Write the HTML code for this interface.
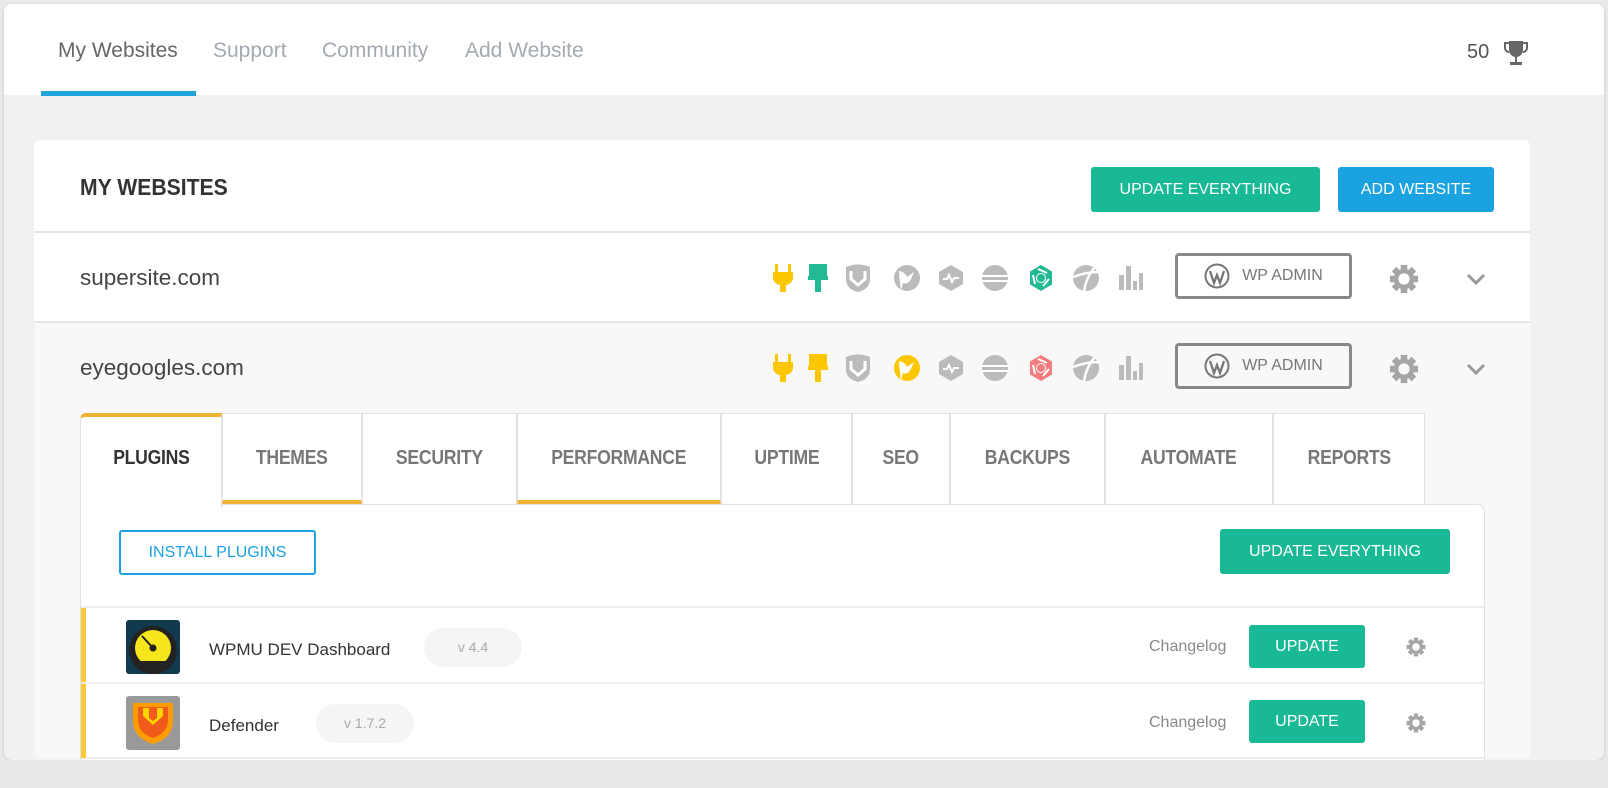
<!DOCTYPE html>
<html><head><meta charset="utf-8"><style>
*{box-sizing:border-box;margin:0;padding:0}
body{width:1608px;height:788px;background:#e9e9e9;font-family:"Liberation Sans",sans-serif;position:relative;overflow:hidden}
.a{position:absolute}
#win{left:4px;top:4px;width:1600px;height:756px;background:#f1f1f1;border-radius:8px;overflow:hidden;box-shadow:0 1px 3px rgba(0,0,0,.15)}
#hdr{left:0;top:0;width:1600px;height:91px;background:#fff}
.nav{top:35px;font-size:21px;color:#a3aab1}
#card{left:34px;top:140px;width:1496px;height:618px;background:#fff;border-radius:6px;overflow:hidden}
.btn{color:#fff;font-size:16px;text-align:center;border-radius:3px}
.row{left:0;width:1496px;border-top:2px solid #e6e6e6}
.site{font-size:22.5px;color:#444;left:46px}
.wp{width:177px;height:46px;border:3px solid #888;border-radius:4px;color:#777;font-size:16px;display:flex;align-items:center;justify-content:center;gap:12px}
.tab{top:413px;height:91px;background:#fff;border:1px solid #e2e2e2;border-bottom:none;font-weight:bold;font-size:20px;color:#777;text-align:center;padding-top:33px;letter-spacing:-.3px}
.tab span{display:inline-block;transform:scaleX(.88)}
.or{border-bottom:4px solid #f0b232}
</style></head><body>
<div id="win" class="a">
 <div id="hdr" class="a">
  <div class="a nav" style="left:54px;color:#666">My Websites</div>
  <div class="a" style="left:37px;top:87px;width:155px;height:5px;background:#1fa4dc"></div>
  <div class="a nav" style="left:209px">Support</div>
  <div class="a nav" style="left:318px">Community</div>
  <div class="a nav" style="left:461px">Add Website</div>
  <div class="a" style="left:1463px;top:37px;font-size:20px;color:#555">50</div>
  <svg class="a" style="left:1500px;top:35px" width="24" height="28" viewBox="0 0 24 28"><path d="M5 2h14v9a7 7 0 0 1-14 0z" fill="#666"/><path d="M5 4H1v5a4 4 0 0 0 4 4M19 4h4v5a4 4 0 0 1-4 4" stroke="#666" stroke-width="2" fill="none"/><rect x="11" y="17" width="2" height="6" fill="#666"/><rect x="6" y="23" width="12" height="3" fill="#666"/></svg>
 </div>
</div>
<div id="card" class="a">
 <div class="a" style="left:46px;top:34px;font-size:23px;font-weight:bold;color:#333;transform:scaleX(.92);transform-origin:left">MY WEBSITES</div>
 <div class="a btn" style="left:1057px;top:27px;width:229px;height:45px;line-height:45px;background:#19b996">UPDATE EVERYTHING</div>
 <div class="a btn" style="left:1304px;top:27px;width:156px;height:45px;line-height:45px;background:#1aa3e0">ADD WEBSITE</div>
 <div class="a row" style="top:91px;height:91px;background:#fff"></div>
 <div class="a site" style="top:125px">supersite.com</div>
 <div class="a row" style="top:181px;height:470px;background:#f8f8f8"></div>
 <div class="a site" style="top:215px">eyegoogles.com</div>
</div>
<!-- icons -->
<svg class="a" style="left:770px;top:260px" width="390" height="130" viewBox="0 0 390 130">
 <defs>
  <g id="plug"><rect x="-8" y="-14" width="3" height="8" fill="currentColor"/><rect x="5" y="-14" width="3" height="8" fill="currentColor"/><path d="M-10-6h20v6a8 8 0 0 1-7 7v7h-6v-7a8 8 0 0 1-7-7z" fill="currentColor"/></g>
  <g id="brush"><rect x="-9" y="-14" width="18" height="12" fill="currentColor"/><rect x="-10" y="-2" width="20" height="4" fill="currentColor"/><rect x="-3" y="2" width="6" height="12" fill="currentColor"/></g>
  <g id="shield"><path d="M-12-11q12-5 24 0v12q0 10-12 13q-12-3-12-13z" fill="#bbb"/><path d="M-7-7v8l7 6 7-6v-8" stroke="#fff" stroke-width="3" fill="none"/></g>
  <g id="hex"><path d="M0-13 12-6v12L0 13-12 6v-12z" fill="#bbb"/><path d="M-8 1h4l2-4 3 7 2-4h5" stroke="#fff" stroke-width="2" fill="none"/></g>
  <g id="stripes"><circle r="13" fill="#bbb"/><rect x="-14" y="-3" width="28" height="2" fill="#fff"/><rect x="-14" y="2" width="28" height="2" fill="#fff"/></g>
  <g id="ap"><path d="M0-13 11-6.5v13L0 13-11 6.5v-13z" fill="currentColor"/><circle r="5" fill="#fff"/><circle r="4" fill="currentColor"/><path d="M-3-9 6-5M8 1 2 8M-6 6-8-3" stroke="#fff" stroke-width="2"/></g>
  <g id="ball"><circle r="13" fill="#bbb"/><path d="M-13-1Q0-6 13-6M-2 13Q0 0 8-10" stroke="#fff" stroke-width="2.5" fill="none"/></g>
  <g id="bars"><rect x="-12" y="-3" width="5" height="15" fill="#bbb"/><rect x="-5" y="-12" width="5" height="24" fill="#bbb"/><rect x="2" y="3" width="4" height="9" fill="#bbb"/><rect x="8" y="-5" width="4" height="17" fill="#bbb"/></g>
  <g id="bird"><circle r="13" fill="currentColor"/><path d="M-8-7q6 1 8 6l7-5-3 7q-3 6-8 4l-2 8-1-9q-1-6-1-11z" fill="#fff"/></g>
 </defs>
 <g transform="translate(13,18)"><use href="#plug" style="color:#fcc600"/></g>
 <g transform="translate(48,18)"><use href="#brush" style="color:#23b995"/></g>
 <g transform="translate(88,18)"><use href="#shield"/></g>
 <g transform="translate(137,18)"><use href="#bird" style="color:#bbb"/></g>
 <g transform="translate(181,18)"><use href="#hex"/></g>
 <g transform="translate(225,18)"><use href="#stripes"/></g>
 <g transform="translate(271,18)"><use href="#ap" style="color:#23b995"/></g>
 <g transform="translate(316,18)"><use href="#ball"/></g>
 <g transform="translate(361,18)"><use href="#bars"/></g>
 <g transform="translate(13,108)"><use href="#plug" style="color:#fcc600"/></g>
 <g transform="translate(48,108)"><use href="#brush" style="color:#fcc600"/></g>
 <g transform="translate(88,108)"><use href="#shield"/></g>
 <g transform="translate(137,108)"><use href="#bird" style="color:#fcc600"/></g>
 <g transform="translate(181,108)"><use href="#hex"/></g>
 <g transform="translate(225,108)"><use href="#stripes"/></g>
 <g transform="translate(271,108)"><use href="#ap" style="color:#f27d7d"/></g>
 <g transform="translate(316,108)"><use href="#ball"/></g>
 <g transform="translate(361,108)"><use href="#bars"/></g>
</svg>
<div class="a wp" style="left:1175px;top:253px"><svg width="26" height="26" viewBox="0 0 26 26"><circle cx="13" cy="13" r="11.5" fill="none" stroke="#777" stroke-width="2"/><path d="M6 8l4 12 3-8 3 8 4-12" stroke="#777" stroke-width="2.3" fill="none"/></svg>WP ADMIN</div>
<div class="a wp" style="left:1175px;top:343px"><svg width="26" height="26" viewBox="0 0 26 26"><circle cx="13" cy="13" r="11.5" fill="none" stroke="#777" stroke-width="2"/><path d="M6 8l4 12 3-8 3 8 4-12" stroke="#777" stroke-width="2.3" fill="none"/></svg>WP ADMIN</div>
<svg class="a" style="left:1389px;top:264px" width="30" height="30" viewBox="-16 -16 32 32"><g id="gear" fill="#a5a5a5"><circle r="11"/><g id="t"><rect x="-3.5" y="-15" width="7" height="6"/><rect x="-3.5" y="9" width="7" height="6"/></g><use href="#t" transform="rotate(45)"/><use href="#t" transform="rotate(90)"/><use href="#t" transform="rotate(135)"/></g><circle r="6" fill="#fff"/></svg>
<svg class="a" style="left:1389px;top:354px" width="30" height="30" viewBox="-16 -16 32 32"><use href="#gear"/><circle r="6" fill="#f8f8f8"/></svg>
<svg class="a" style="left:1466px;top:272px" width="20" height="14"><path d="M2 3l8 8 8-8" stroke="#999" stroke-width="3" fill="none"/></svg>
<svg class="a" style="left:1466px;top:362px" width="20" height="14"><path d="M2 3l8 8 8-8" stroke="#999" stroke-width="3" fill="none"/></svg>
<!-- tabs -->
<div class="a tab" style="left:80px;width:142px;color:#333;border-top:4px solid #f0b232;border-radius:6px 0 0 0;height:95px;padding-top:30px;z-index:2"><span>PLUGINS</span></div>
<div class="a tab or" style="left:222px;width:140px"><span>THEMES</span></div>
<div class="a tab" style="left:362px;width:155px"><span>SECURITY</span></div>
<div class="a tab or" style="left:517px;width:204px"><span>PERFORMANCE</span></div>
<div class="a tab" style="left:721px;width:131px"><span>UPTIME</span></div>
<div class="a tab" style="left:852px;width:98px"><span>SEO</span></div>
<div class="a tab" style="left:950px;width:155px"><span>BACKUPS</span></div>
<div class="a tab" style="left:1105px;width:168px"><span>AUTOMATE</span></div>
<div class="a tab" style="left:1273px;width:152px"><span>REPORTS</span></div>
<!-- panel -->
<div class="a" style="left:80px;top:504px;width:1405px;height:260px;background:#fff;border:1px solid #e2e2e2;border-radius:0 8px 0 0"></div>
<div class="a" style="left:81px;top:500px;width:140px;height:8px;background:#fff;z-index:3"></div>
<div class="a" style="left:119px;top:530px;width:197px;height:45px;border:2px solid #1aa3e0;border-radius:3px;color:#1aa3e0;font-size:16px;text-align:center;line-height:41px">INSTALL PLUGINS</div>
<div class="a btn" style="left:1220px;top:529px;width:230px;height:45px;line-height:45px;background:#19b996">UPDATE EVERYTHING</div>
<div class="a" style="left:81px;top:606px;width:1403px;height:2px;background:#eee"></div>
<div class="a" style="left:81px;top:682px;width:1403px;height:2px;background:#eee"></div>
<div class="a" style="left:81px;top:757px;width:1403px;height:2px;background:#eee"></div>
<div class="a" style="left:81px;top:608px;width:5px;height:74px;background:#fcc93a"></div>
<div class="a" style="left:81px;top:684px;width:5px;height:74px;background:#fcc93a"></div>
<svg class="a" style="left:126px;top:620px" width="54" height="54" viewBox="0 0 54 54"><rect width="54" height="54" rx="3" fill="#123a4e"/><circle cx="27" cy="30" r="24" fill="#222"/><circle cx="27" cy="28" r="18" fill="#f4e51c"/><path d="M9 41h36l-5 6H14z" fill="#222"/><path d="M16 16l11 12" stroke="#222" stroke-width="2"/><circle cx="27" cy="28" r="3.5" fill="#222"/></svg>
<svg class="a" style="left:126px;top:696px" width="54" height="54" viewBox="0 0 54 54"><rect width="54" height="54" rx="3" fill="#999"/><path d="M7 7h40v17q0 18-20 24Q7 42 7 24z" fill="#ff9d00"/><path d="M12 11h30v13q0 13-15 18-15-5-15-18z" fill="#f05a1a"/><path d="M17 12v8l10 9 10-9v-8h-6v10l-4 3-4-3V12z" fill="#ffd200"/></svg>
<div class="a" style="left:209px;top:640px;font-size:17px;color:#333">WPMU DEV Dashboard</div>
<div class="a" style="left:424px;top:628px;width:98px;height:39px;border-radius:20px;background:#f5f5f5;color:#aaa;font-size:14px;text-align:center;line-height:39px">v 4.4</div>
<div class="a" style="left:209px;top:716px;font-size:17px;color:#333">Defender</div>
<div class="a" style="left:316px;top:704px;width:98px;height:39px;border-radius:20px;background:#f5f5f5;color:#aaa;font-size:14px;text-align:center;line-height:39px">v 1.7.2</div>
<div class="a" style="left:1149px;top:638px;font-size:16px;color:#888">Changelog</div>
<div class="a" style="left:1149px;top:714px;font-size:16px;color:#888">Changelog</div>
<div class="a btn" style="left:1249px;top:625px;width:116px;height:43px;line-height:43px;background:#19b996">UPDATE</div>
<div class="a btn" style="left:1249px;top:700px;width:116px;height:43px;line-height:43px;background:#19b996">UPDATE</div>
<svg class="a" style="left:1406px;top:637px" width="20" height="20" viewBox="-16 -16 32 32"><use href="#gear"/><circle r="6" fill="#fff"/></svg>
<svg class="a" style="left:1406px;top:713px" width="20" height="20" viewBox="-16 -16 32 32"><use href="#gear"/><circle r="6" fill="#fff"/></svg>
<div class="a" style="left:0;top:760px;width:1608px;height:28px;background:#e9e9e9;z-index:5"></div>
</body></html>
